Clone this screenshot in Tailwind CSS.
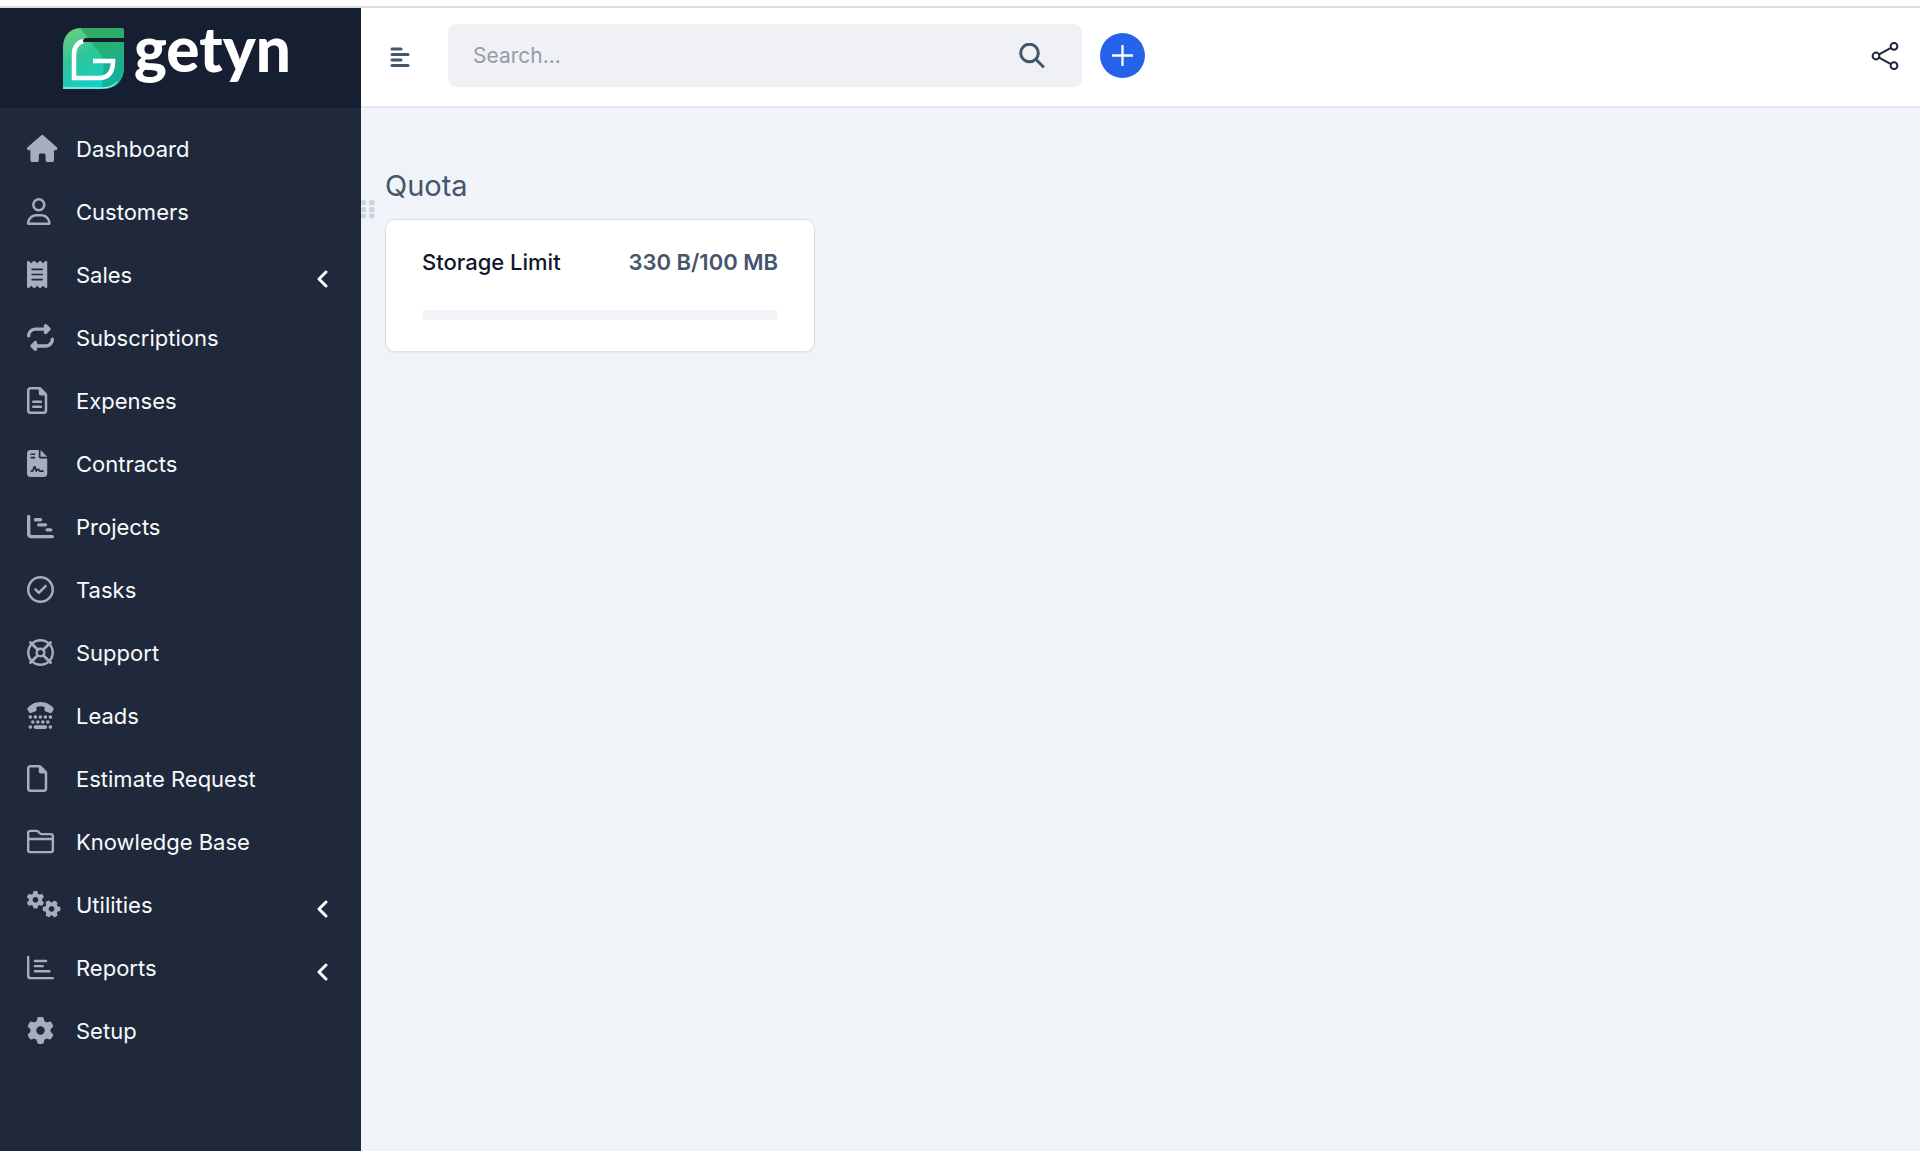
<!DOCTYPE html>
<html lang="en">
<head>
    <meta charset="UTF-8">
    <meta name="viewport" content="width=device-width, initial-scale=1.0">
    <title>Getyn</title>
    <script src="https://cdn.jsdelivr.net/npm/@tailwindcss/browser@4"></script>
</head>
<body class="min-h-screen flex flex-col bg-white font-['Inter',sans-serif]">
    <!-- shapes used more than once -->
    <svg class="hidden" aria-hidden="true">
        <symbol id="gear" viewBox="0 0 512 512">
            <path d="M495.9 166.6c3.2 8.7 .5 18.4-6.4 24.6l-43.3 39.4c1.1 8.3 1.7 16.8 1.7 25.4s-.6 17.1-1.7 25.4l43.3 39.4c6.9 6.2 9.6 15.9 6.4 24.6c-4.4 11.9-9.7 23.3-15.8 34.3l-4.7 8.1c-6.6 11-14 21.4-22.1 31.2c-5.9 7.2-15.7 9.6-24.5 6.8l-55.7-17.7c-13.4 10.3-28.2 18.9-44 25.4l-12.5 57.1c-2 9.1-9 16.3-18.2 17.8c-13.8 2.3-28 3.5-42.5 3.5s-28.7-1.2-42.5-3.5c-9.2-1.5-16.2-8.7-18.2-17.8l-12.5-57.1c-15.8-6.5-30.6-15.1-44-25.4L83.1 425.9c-8.8 2.8-18.6 .3-24.5-6.8c-8.1-9.8-15.5-20.2-22.1-31.2l-4.7-8.1c-6.1-11-11.4-22.4-15.8-34.3c-3.2-8.7-.5-18.4 6.4-24.6l43.3-39.4C64.6 273.1 64 264.6 64 256s.6-17.1 1.7-25.4L22.4 191.2c-6.9-6.2-9.6-15.9-6.4-24.6c4.4-11.9 9.7-23.3 15.8-34.3l4.7-8.1c6.6-11 14-21.4 22.1-31.2c5.9-7.2 15.7-9.6 24.5-6.8l55.7 17.7c13.4-10.3 28.2-18.9 44-25.4l12.5-57.1c2-9.1 9-16.3 18.2-17.8C227.3 1.2 241.5 0 256 0s28.7 1.2 42.5 3.5c9.2 1.5 16.2 8.7 18.2 17.8l12.5 57.1c15.8 6.5 30.6 15.1 44 25.4l55.7-17.7c8.8-2.8 18.6-.3 24.5 6.8c8.1 9.8 15.5 20.2 22.1 31.2l4.7 8.1c6.1 11 11.4 22.4 15.8 34.3zM256 336a80 80 0 1 0 0-160 80 80 0 1 0 0 160z"/>
        </symbol>
        <symbol id="angle" viewBox="0 0 12 20">
            <path d="M10 3L3 10l7 7" fill="none" stroke="currentColor" stroke-width="3" stroke-linecap="round" stroke-linejoin="round"/>
        </symbol>
    </svg>

    <div class="h-2 border-b-2 border-[#dcdde0]"></div>

    <div class="flex flex-1">
        <aside class="w-[361px] shrink-0 bg-[#1f293b] text-slate-50">
            <a href="#" class="flex h-[100px] items-start gap-[10px] bg-[#161e31] pl-[63px] pt-5" aria-label="getyn">
                <svg class="h-[61px] w-[61px] shrink-0" viewBox="0 0 61 61">
                    <defs>
                        <linearGradient id="leaf" x1="0" y1="0" x2="0.5" y2="1">
                            <stop offset="0" stop-color="#6fd07c"/>
                            <stop offset="0.5" stop-color="#2fc59a"/>
                            <stop offset="1" stop-color="#0fd0c9"/>
                        </linearGradient>
                        <linearGradient id="shade" x1="0" y1="0" x2="0.2" y2="1">
                            <stop offset="0" stop-color="#35ab5c"/>
                            <stop offset="1" stop-color="#12b39f"/>
                        </linearGradient>
                    </defs>
                    <path d="M0 61V19C0 7 8 0 18 0H58q3 0 3 3V38C61 53 53 61 39 61Z" fill="url(#leaf)"/>
                    <path d="M17 0H58q3 0 3 3V38C61 53 53 61 39 61L41 31 35 23Z" fill="url(#shade)"/>
                    <path d="M61 10H22l-3 4H61Z" fill="#161e31"/>
                    <path d="M20 13Q11 16 11 26V50H36Q50 50 50 33H30" fill="none" stroke="#fff" stroke-width="4.5"/>
                    <path d="M0 60H39Q48 60 54 54" fill="none" stroke="#d5fff4"/>
                </svg>
                <span class="font-['Lato',sans-serif] text-[62px] leading-[40px] font-black text-white">getyn</span>
            </a>

            <nav class="pt-[10px] text-[22px]" aria-label="Main">
                <ul>
                    <li><a href="#" class="flex h-[63px] items-center pl-[27px] pr-[33px]">
                        <svg class="mb-[2px] h-[27px] w-[49px] text-[#a4aebd]" viewBox="0 0 576 512" preserveAspectRatio="xMinYMid" fill="currentColor"><path d="M575.8 255.5c0 18-15 32.1-32 32.1h-32l.7 160.2c0 2.7-.2 5.4-.5 8.1V472c0 22.1-17.9 40-40 40H456c-1.1 0-2.2 0-3.3-.1c-1.4 .1-2.8 .1-4.2 .1H416 392c-22.1 0-40-17.9-40-40V448 384c0-17.7-14.3-32-32-32H256c-17.7 0-32 14.3-32 32v64 24c0 22.1-17.9 40-40 40H160 128.1c-1.5 0-3-.1-4.5-.2c-1.2 .1-2.4 .2-3.6 .2H104c-22.1 0-40-17.9-40-40V360c0-.9 0-1.9 .1-2.8V287.6H32c-18 0-32-14-32-32.1c0-9 3-17 10-24L266.4 8c7-7 15-8 22-8s15 2 21 7L564.8 231.5c8 7 12 15 11 24z"/></svg>
                        Dashboard</a></li>
                    <li><a href="#" class="flex h-[63px] items-center pl-[27px] pr-[33px]">
                        <svg class="mb-[2px] h-[27px] w-[49px] text-[#a4aebd]" viewBox="0 0 448 512" preserveAspectRatio="xMinYMid" fill="currentColor"><path d="M304 128a80 80 0 1 0 -160 0 80 80 0 1 0 160 0zM96 128a128 128 0 1 1 256 0A128 128 0 1 1 96 128zM49.3 464H398.7c-8.9-63.3-63.3-112-129-112H178.3c-65.7 0-120.1 48.7-129 112zM0 482.3C0 383.8 79.8 304 178.3 304h91.4C368.2 304 448 383.8 448 482.3c0 16.4-13.3 29.7-29.7 29.7H29.7C13.3 512 0 498.7 0 482.3z"/></svg>
                        Customers</a></li>
                    <li><a href="#" class="flex h-[63px] items-center pl-[27px] pr-[33px]">
                        <svg class="mb-[2px] h-[27px] w-[49px] text-[#a4aebd]" viewBox="0 0 384 512" preserveAspectRatio="xMinYMid" fill="currentColor"><path d="M14 2.2C22.5-1.7 32.5-.3 39.6 5.8L80 40.4 120.4 5.8c9-7.7 22.3-7.7 31.2 0L192 40.4 232.4 5.8c9-7.7 22.3-7.7 31.2 0L304 40.4 344.4 5.8c7.1-6.1 17.1-7.5 25.6-3.6s14 12.4 14 21.8V488c0 9.4-5.5 17.9-14 21.8s-18.5 2.5-25.6-3.6L304 471.6l-40.4 34.6c-9 7.7-22.3 7.7-31.2 0L192 471.6l-40.4 34.6c-9 7.7-22.3 7.7-31.2 0L80 471.6 39.6 506.2c-7.1 6.1-17.1 7.5-25.6 3.6S0 497.4 0 488V24C0 14.6 5.5 6.1 14 2.2zM96 144c-8.8 0-16 7.2-16 16s7.2 16 16 16H288c8.8 0 16-7.2 16-16s-7.2-16-16-16H96zM80 352c0 8.8 7.2 16 16 16H288c8.8 0 16-7.2 16-16s-7.2-16-16-16H96c-8.8 0-16 7.2-16 16zM96 240c-8.8 0-16 7.2-16 16s7.2 16 16 16H288c8.8 0 16-7.2 16-16s-7.2-16-16-16H96z"/></svg>
                        Sales
                        <svg class="ml-auto mt-[6px] h-5 w-3"><use href="#angle"/></svg></a></li>
                    <li><a href="#" class="flex h-[63px] items-center pl-[27px] pr-[33px]">
                        <svg class="mb-[2px] h-[27px] w-[49px] text-[#a4aebd]" viewBox="0 0 512 512" preserveAspectRatio="xMinYMid" fill="currentColor"><path d="M0 224c0 17.7 14.3 32 32 32s32-14.3 32-32c0-53 43-96 96-96H320v32c0 12.9 7.8 24.6 19.8 29.6s25.7 2.2 34.9-6.9l64-64c12.5-12.5 12.5-32.8 0-45.3l-64-64c-9.2-9.2-22.9-11.9-34.9-6.9S320 19.1 320 32V64H160C71.6 64 0 135.6 0 224zm512 64c0-17.7-14.3-32-32-32s-32 14.3-32 32c0 53-43 96-96 96H192V352c0-12.9-7.8-24.6-19.8-29.6s-25.7-2.2-34.9 6.9l-64 64c-12.5 12.5-12.5 32.8 0 45.3l64 64c9.2 9.2 22.9 11.9 34.9 6.9s19.8-16.6 19.8-29.6V448H352c88.4 0 160-71.6 160-160z"/></svg>
                        Subscriptions</a></li>
                    <li><a href="#" class="flex h-[63px] items-center pl-[27px] pr-[33px]">
                        <svg class="mb-[2px] h-[27px] w-[49px] text-[#a4aebd]" viewBox="0 0 384 512" preserveAspectRatio="xMinYMid" fill="currentColor"><path d="M64 464c-8.8 0-16-7.2-16-16V64c0-8.8 7.2-16 16-16H224v80c0 17.7 14.3 32 32 32h80V448c0 8.8-7.2 16-16 16H64zM64 0C28.7 0 0 28.7 0 64V448c0 35.3 28.7 64 64 64H320c35.3 0 64-28.7 64-64V154.5c0-17-6.7-33.3-18.7-45.3L274.7 18.7C262.7 6.7 246.5 0 229.5 0H64zm56 256c-13.3 0-24 10.7-24 24s10.7 24 24 24H264c13.3 0 24-10.7 24-24s-10.7-24-24-24H120zm0 96c-13.3 0-24 10.7-24 24s10.7 24 24 24H264c13.3 0 24-10.7 24-24s-10.7-24-24-24H120z"/></svg>
                        Expenses</a></li>
                    <li><a href="#" class="flex h-[63px] items-center pl-[27px] pr-[33px]">
                        <svg class="mb-[2px] h-[27px] w-[49px] text-[#a4aebd]" viewBox="0 0 384 512" preserveAspectRatio="xMinYMid" fill="currentColor"><path d="M64 0C28.7 0 0 28.7 0 64V448c0 35.3 28.7 64 64 64H320c35.3 0 64-28.7 64-64V160H256c-17.7 0-32-14.3-32-32V0H64zM256 0V128H384L256 0zM80 64h64c8.8 0 16 7.2 16 16s-7.2 16-16 16H80c-8.8 0-16-7.2-16-16s7.2-16 16-16zm0 64h64c8.8 0 16 7.2 16 16s-7.2 16-16 16H80c-8.8 0-16-7.2-16-16s7.2-16 16-16zm54.2 253.8c-6.1 20.3-24.8 34.2-46 34.2H80c-8.8 0-16-7.2-16-16s7.2-16 16-16h8.2c7.1 0 13.3-4.6 15.3-11.4l14.9-49.5c3.4-11.3 13.8-19.1 25.6-19.1s22.2 7.7 25.6 19.1l11.6 38.6c7.4-6.2 16.8-9.7 26.8-9.7c15.9 0 30.4 9 37.5 23.2l4.4 8.8H304c8.8 0 16 7.2 16 16s-7.2 16-16 16H240c-6.1 0-11.6-3.4-14.3-8.8l-8.8-17.7c-1.7-3.4-5.1-5.5-8.8-5.5s-7.2 2.1-8.8 5.5l-8.8 17.7c-2.9 5.9-9.2 9.4-15.7 8.8s-12.1-5.1-13.9-11.3L144 349l-9.8 32.8z"/></svg>
                        Contracts</a></li>
                    <li><a href="#" class="flex h-[63px] items-center pl-[27px] pr-[33px]">
                        <svg class="mb-[2px] h-[27px] w-[49px] text-[#a4aebd]" viewBox="0 0 512 512" preserveAspectRatio="xMinYMid" fill="currentColor"><path d="M32 32c17.7 0 32 14.3 32 32V400c0 8.8 7.2 16 16 16H480c17.7 0 32 14.3 32 32s-14.3 32-32 32H80c-44.2 0-80-35.8-80-80V64C0 46.3 14.3 32 32 32zm96 96c0-17.7 14.3-32 32-32l96 0c17.7 0 32 14.3 32 32s-14.3 32-32 32H160c-17.7 0-32-14.3-32-32zm96 64H352c17.7 0 32 14.3 32 32s-14.3 32-32 32H224c-17.7 0-32-14.3-32-32s14.3-32 32-32zm160 96h64c17.7 0 32 14.3 32 32s-14.3 32-32 32H384c-17.7 0-32-14.3-32-32s14.3-32 32-32z"/></svg>
                        Projects</a></li>
                    <li><a href="#" class="flex h-[63px] items-center pl-[27px] pr-[33px]">
                        <svg class="mb-[2px] h-[27px] w-[49px] text-[#a4aebd]" viewBox="0 0 512 512" preserveAspectRatio="xMinYMid" fill="currentColor"><path d="M256 48a208 208 0 1 1 0 416 208 208 0 1 1 0-416zm0 464A256 256 0 1 0 256 0a256 256 0 1 0 0 512zM369 209c9.4-9.4 9.4-24.6 0-33.9s-24.6-9.4-33.9 0l-111 111-47-47c-9.4-9.4-24.6-9.4-33.9 0s-9.4 24.6 0 33.9l64 64c9.4 9.4 24.6 9.4 33.9 0L369 209z"/></svg>
                        Tasks</a></li>
                    <li><a href="#" class="flex h-[63px] items-center pl-[27px] pr-[33px]">
                        <svg class="mb-[2px] h-[27px] w-[49px] text-[#a4aebd]" viewBox="0 0 512 512" preserveAspectRatio="xMinYMid" fill="none" stroke="currentColor" stroke-width="46" stroke-linecap="round"><circle cx="256" cy="256" r="232"/><circle cx="256" cy="256" r="72"/><path d="M66 66L200 200M446 66L312 200M66 446L200 312M446 446L312 312" stroke-width="54"/></svg>
                        Support</a></li>
                    <li><a href="#" class="flex h-[63px] items-center pl-[27px] pr-[33px]">
                        <svg class="mb-[2px] h-[27px] w-[49px] text-[#a4aebd]" viewBox="0 0 512 512" preserveAspectRatio="xMinYMid" fill="currentColor"><path d="M38 193L15 153c-22-38-8-37 5-50C61 59 145 0 256 0s195 59 236 103c13 13 27 12 5 50l-23 40c-8 14-24 20-38 15l-81-27c-13-4-22-16-22-30V96c-50-18-104-18-154 0v55c0 14-9 26-22 30l-81 27c-14 5-30-1-38-15z"/><path d="M63 284h1M158 284h1M253 284h1M348 284h1M443 284h1M110 379h1M205 379h1M300 379h1M395 379h1M63 476h1M158 476h190M443 476h1" fill="none" stroke="currentColor" stroke-width="68" stroke-linecap="round"/></svg>
                        Leads</a></li>
                    <li><a href="#" class="flex h-[63px] items-center pl-[27px] pr-[33px]">
                        <svg class="mb-[2px] h-[27px] w-[49px] text-[#a4aebd]" viewBox="0 0 384 512" preserveAspectRatio="xMinYMid" fill="currentColor"><path d="M64 464c-8.8 0-16-7.2-16-16V64c0-8.8 7.2-16 16-16H224v80c0 17.7 14.3 32 32 32h80V448c0 8.8-7.2 16-16 16H64zM64 0C28.7 0 0 28.7 0 64V448c0 35.3 28.7 64 64 64H320c35.3 0 64-28.7 64-64V154.5c0-17-6.7-33.3-18.7-45.3L274.7 18.7C262.7 6.7 246.5 0 229.5 0H64z"/></svg>
                        Estimate Request</a></li>
                    <li><a href="#" class="flex h-[63px] items-center pl-[27px] pr-[33px]">
                        <svg class="mb-[2px] h-[27px] w-[49px] text-[#a4aebd]" viewBox="0 0 512 512" preserveAspectRatio="xMinYMid" fill="none" stroke="currentColor" stroke-width="46" stroke-linejoin="round"><path d="M64 54H182q16 0 28 12l38 38q12 12 28 12H448q42 0 42 42V416q0 42-42 42H64q-42 0-42-42V96q0-42 42-42zM22 210H490"/></svg>
                        Knowledge Base</a></li>
                    <li><a href="#" class="flex h-[63px] items-center pl-[27px] pr-[33px]">
                        <svg class="mb-[2px] h-[27px] w-[49px] text-[#a4aebd]" viewBox="0 0 640 512" preserveAspectRatio="xMinYMid" fill="currentColor"><use href="#gear" x="-8" y="0" width="336" height="336"/><use href="#gear" x="298" y="172" width="336" height="336" transform="rotate(30 466 340)"/></svg>
                        Utilities
                        <svg class="ml-auto mt-[6px] h-5 w-3"><use href="#angle"/></svg></a></li>
                    <li><a href="#" class="flex h-[63px] items-center pl-[27px] pr-[33px]">
                        <svg class="mb-[2px] h-[27px] w-[49px] text-[#a4aebd]" viewBox="0 0 512 512" preserveAspectRatio="xMinYMid" fill="none" stroke="currentColor" stroke-width="46" stroke-linecap="round"><path d="M22 54V410q0 48 48 48H490M150 134H362M150 230H298M150 326H426"/></svg>
                        Reports
                        <svg class="ml-auto mt-[6px] h-5 w-3"><use href="#angle"/></svg></a></li>
                    <li><a href="#" class="flex h-[63px] items-center pl-[27px] pr-[33px]">
                        <svg class="mb-[2px] h-[27px] w-[49px] text-[#a4aebd]" viewBox="0 0 512 512" preserveAspectRatio="xMinYMid" fill="currentColor"><use href="#gear" width="512" height="512"/></svg>
                        Setup</a></li>
                </ul>
            </nav>
        </aside>

        <div class="flex min-w-0 flex-1 flex-col bg-[#f0f4f8]">
            <header class="flex h-[100px] items-start border-b-2 border-slate-200 bg-white pt-4 pl-[29px] pr-[21px]">
                <button type="button" class="flex h-[66px] w-5 items-center" aria-label="Toggle menu">
                    <svg class="h-5 w-5 text-slate-600" viewBox="0 0 20 20" fill="none" stroke="currentColor" stroke-width="3" stroke-linecap="round"><path d="M2 2H11M2 7.500H18M2 13H11M2 18.500H18"/></svg>
                </button>
                <form class="ml-[38px] flex h-[63px] w-[634px] items-center rounded-lg bg-[#eff1f5] pl-[25px] pr-[37px]">
                    <input type="search" aria-label="Search" placeholder="Search..." class="min-w-0 flex-1 bg-transparent text-[21px] text-slate-700 placeholder:text-[#969daa] outline-none">
                    <button type="button" aria-label="Search">
                        <svg class="h-[26px] w-[26px] text-slate-600" viewBox="0 0 26 26" fill="none" stroke="currentColor" stroke-width="3" stroke-linecap="round"><circle cx="10.500" cy="10" r="8.800"/><path d="M17 16.500l7 7"/></svg>
                    </button>
                </form>
                <button type="button" class="mt-[9px] ml-[18px] flex h-[45px] w-[45px] items-center justify-center rounded-full bg-[#2563eb] text-white" aria-label="Quick create">
                    <svg class="h-[23px] w-[23px]" viewBox="0 0 23 23" fill="none" stroke="currentColor" stroke-width="2.300"><path d="M11.500 1V22M1 11.500H22"/></svg>
                </button>
                <button type="button" class="ml-auto flex h-[63px] items-center" aria-label="Share">
                    <svg class="h-7 w-7 text-slate-800" viewBox="0 0 28 28" fill="none" stroke="currentColor" stroke-width="2"><circle cx="5" cy="14" r="3.400"/><circle cx="23" cy="4.300" r="3.400"/><circle cx="23" cy="23.700" r="3.400"/><path d="M8 12.400L20 5.900M8 15.600L20 22.100"/></svg>
                </button>
            </header>

            <main class="relative px-6 pt-[56px]">
                <svg class="absolute top-[91px] left-0 h-5 w-[14px] text-slate-300" viewBox="0 0 14 20" fill="currentColor" aria-hidden="true"><rect x="0" y="1" width="5" height="5" rx="1.500"/><rect x="8" y="1" width="5.500" height="5" rx="1.500"/><rect x="0" y="8" width="5" height="5" rx="1.500"/><rect x="8" y="8" width="5.500" height="5" rx="1.500"/><rect x="0" y="14.500" width="5" height="5" rx="1.500"/><rect x="8" y="14.500" width="5.500" height="5" rx="1.500"/></svg>
                <h1 class="text-[29px] leading-[44px] text-slate-600">Quota</h1>
                <section class="mt-[11px] w-[430px] rounded-[10px] border border-[#dcdfea] bg-white px-[36px] pt-[26px] pb-[31px] shadow-xs">
                    <div class="flex items-center justify-between text-[22px] leading-8">
                        <h2 class="font-medium text-slate-900">Storage Limit</h2>
                        <span class="font-semibold text-slate-600">330 B/100 MB</span>
                    </div>
                    <div class="mt-8 h-[10px] rounded bg-[#f2f4f7]" role="progressbar" aria-label="Storage used" aria-valuemin="0" aria-valuemax="100" aria-valuenow="0"></div>
                </section>
            </main>
        </div>
    </div>
</body>
</html>
